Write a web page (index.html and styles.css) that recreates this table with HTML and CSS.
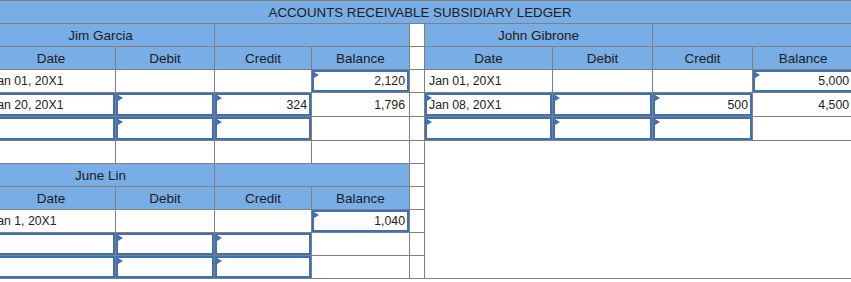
FILE: index.html
```html
<!DOCTYPE html>
<html>
<head>
<meta charset="utf-8">
<link rel="stylesheet" href="styles.css">
</head>
<body>
<div class="viewport">
<table class="ledger">
  <colgroup>
    <col class="w-date-l"><col class="w-debit-l"><col class="w-credit-l"><col class="w-bal-l">
    <col class="w-gap">
    <col class="w-date-r"><col class="w-debit-r"><col class="w-credit-r"><col class="w-bal-r">
  </colgroup>
  <tr class="r23">
    <td class="hd title" colspan="9">ACCOUNTS RECEIVABLE SUBSIDIARY LEDGER</td>
  </tr>
  <tr class="r23">
    <td class="hd" colspan="2">Jim Garcia</td>
    <td class="hd" colspan="2"></td>
    <td class="gap"></td>
    <td class="hd" colspan="2">John Gibrone</td>
    <td class="hd" colspan="2"></td>
  </tr>
  <tr class="r23">
    <td class="hd">Date</td><td class="hd">Debit</td><td class="hd">Credit</td><td class="hd">Balance</td>
    <td class="gap"></td>
    <td class="hd">Date</td><td class="hd">Debit</td><td class="hd">Credit</td><td class="hd">Balance</td>
  </tr>
  <tr class="r23">
    <td><div class="cell">Jan 01, 20X1</div></td>
    <td><div class="cell"></div></td>
    <td><div class="cell"></div></td>
    <td><div class="cell field num">2,120</div></td>
    <td class="gap"></td>
    <td><div class="cell">Jan 01, 20X1</div></td>
    <td><div class="cell"></div></td>
    <td><div class="cell"></div></td>
    <td><div class="cell field num">5,000</div></td>
  </tr>
  <tr class="r24">
    <td><div class="cell field">Jan 20, 20X1</div></td>
    <td><div class="cell field"></div></td>
    <td><div class="cell field num">324</div></td>
    <td><div class="cell num">1,796</div></td>
    <td class="gap"></td>
    <td><div class="cell field">Jan 08, 20X1</div></td>
    <td><div class="cell field"></div></td>
    <td><div class="cell field num">500</div></td>
    <td><div class="cell num">4,500</div></td>
  </tr>
  <tr class="r24">
    <td><div class="cell field"></div></td>
    <td><div class="cell field"></div></td>
    <td><div class="cell field"></div></td>
    <td><div class="cell"></div></td>
    <td class="gap"></td>
    <td><div class="cell field"></div></td>
    <td><div class="cell field"></div></td>
    <td><div class="cell field"></div></td>
    <td><div class="cell"></div></td>
  </tr>
  <tr class="r23">
    <td><div class="cell"></div></td>
    <td><div class="cell"></div></td>
    <td><div class="cell"></div></td>
    <td><div class="cell"></div></td>
    <td class="gap"></td>
    <td class="blank" colspan="4" rowspan="6"></td>
  </tr>
  <tr class="r23">
    <td class="hd" colspan="2">June Lin</td>
    <td class="hd" colspan="2"></td>
    <td class="gap"></td>
  </tr>
  <tr class="r23">
    <td class="hd">Date</td><td class="hd">Debit</td><td class="hd">Credit</td><td class="hd">Balance</td>
    <td class="gap"></td>
  </tr>
  <tr class="r23">
    <td><div class="cell">Jan 1, 20X1</div></td>
    <td><div class="cell"></div></td>
    <td><div class="cell"></div></td>
    <td><div class="cell field num">1,040</div></td>
    <td class="gap"></td>
  </tr>
  <tr class="r23">
    <td><div class="cell field"></div></td>
    <td><div class="cell field"></div></td>
    <td><div class="cell field"></div></td>
    <td><div class="cell"></div></td>
    <td class="gap"></td>
  </tr>
  <tr class="r23">
    <td><div class="cell field"></div></td>
    <td><div class="cell field"></div></td>
    <td><div class="cell field"></div></td>
    <td><div class="cell"></div></td>
    <td class="gap"></td>
  </tr>
</table>
</div>
</body>
</html>
```
FILE: styles.css
```css
html, body {
  margin: 0;
  padding: 0;
  background: #ffffff;
}
.viewport {
  width: 851px;
  height: 282px;
  overflow: hidden;
}
.ledger {
  margin-left: -14px;
  border-collapse: collapse;
  table-layout: fixed;
  width: 867px;
  font-family: "Liberation Sans", Arial, sans-serif;
  color: #1f1f1f;
}
.w-date-l { width: 129px; }
.w-debit-l { width: 99px; }
.w-credit-l { width: 97px; }
.w-bal-l { width: 98px; }
.w-gap { width: 15px; }
.w-date-r { width: 128px; }
.w-debit-r { width: 100px; }
.w-credit-r { width: 100px; }
.w-bal-r { width: 101px; }

.ledger td {
  border: 1px solid #808080;
  padding: 0;
  vertical-align: middle;
}
.r23 td { height: 22px; }
.r24 td { height: 23px; }

.ledger td.hd {
  background: #79ade5;
  text-align: center;
  font-size: 13.5px;
  color: #1c1c1c;
}
.ledger td.hd.title {
  font-size: 13.3px;
}
.ledger td.gap, .ledger td.blank {
  background: #ffffff;
}
.cell {
  box-sizing: border-box;
  height: 22px;
  display: flex;
  align-items: center;
  padding: 0 4px 0 4px;
  font-size: 12.3px;
  color: #222222;
  white-space: nowrap;
  overflow: hidden;
}
.r24 .cell { height: 23px; }
.cell.num {
  justify-content: flex-end;
}
.cell.field {
  position: relative;
  border: 2px solid #3f70b3;
  padding: 0 2px 0 2px;
}
.cell.field::before {
  content: "";
  position: absolute;
  left: 0;
  top: 0;
  width: 0;
  height: 0;
  border-left: 5px solid #3f70b3;
  border-top: 3px solid transparent;
  border-bottom: 3px solid transparent;
}
```
